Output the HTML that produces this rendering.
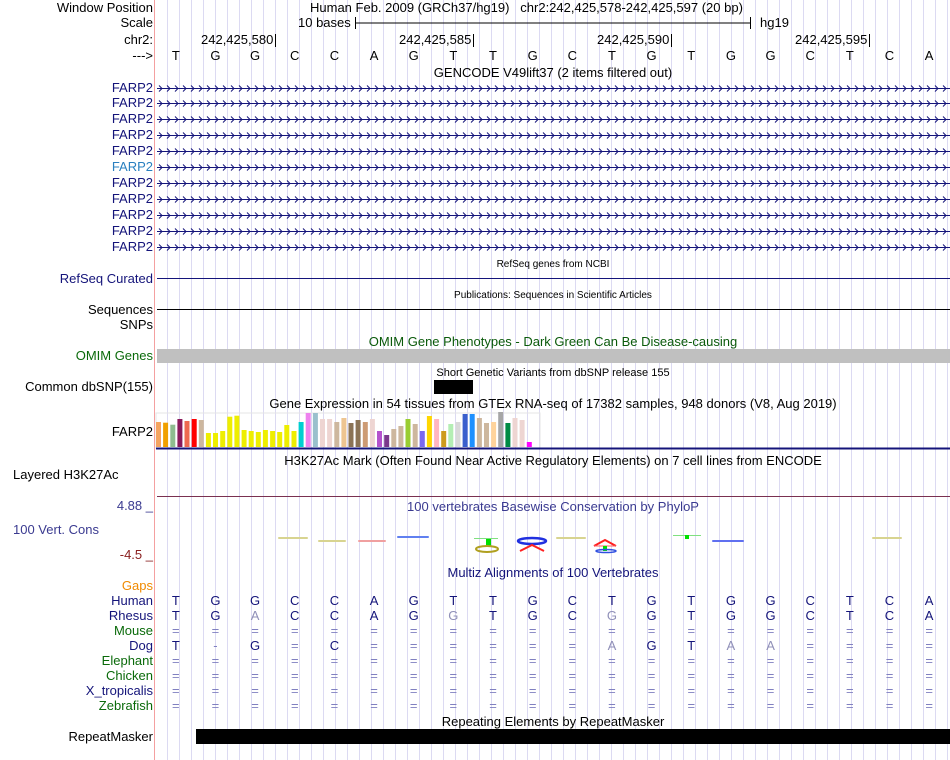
<!DOCTYPE html>
<html><head><meta charset="utf-8">
<style>
body{margin:0;width:950px;height:760px;overflow:hidden;background:#fff;font-family:"Liberation Sans",sans-serif;font-size:13px;position:relative}
#grid{position:absolute;left:156px;top:0;width:794px;height:760px;background:repeating-linear-gradient(90deg,transparent 0,transparent 11px,#dcdaf2 11px,#dcdaf2 12px)}
#pink{position:absolute;left:154px;top:0;width:1px;height:760px;background:#f4a0a0}
.t{position:absolute;white-space:nowrap;line-height:14px}
.l{position:absolute;right:797px;white-space:nowrap;line-height:14px;text-align:right}
.c{position:absolute;left:156px;width:794px;text-align:center;white-space:nowrap;line-height:14px}
.b{position:absolute;width:40px;text-align:center;line-height:14px}
</style></head><body>
<div id="grid"></div><div id="pink"></div>
<svg style="position:absolute;left:0;top:0" width="950" height="760">
<line x1="355" y1="23" x2="751" y2="23" stroke="#000"/><line x1="355.5" y1="17" x2="355.5" y2="29" stroke="#000"/><line x1="750.5" y1="17" x2="750.5" y2="29" stroke="#000"/>
<line x1="275.5" y1="34" x2="275.5" y2="47" stroke="#000"/><line x1="473.5" y1="34" x2="473.5" y2="47" stroke="#000"/><line x1="671.5" y1="34" x2="671.5" y2="47" stroke="#000"/><line x1="869.5" y1="34" x2="869.5" y2="47" stroke="#000"/>
<line x1="157" y1="278.5" x2="950" y2="278.5" stroke="#14147a"/>
<line x1="157" y1="309.5" x2="950" y2="309.5" stroke="#000"/>
<rect x="157" y="349" width="793" height="14" fill="#c0c0c0"/>
<rect x="434" y="380" width="39" height="14" fill="#000"/>
<rect x="156" y="413" width="384" height="35" fill="none" stroke="#e4e4e4"/>
<line x1="156" y1="448.5" x2="950" y2="448.5" stroke="#14147a" stroke-width="2"/>
<line x1="157" y1="496.5" x2="950" y2="496.5" stroke="#7a3050"/>
<rect x="196" y="729" width="754" height="15" fill="#000"/>
</svg>
<div class="l" style="top:1px">Window Position</div>
<div class="l" style="top:16px">Scale</div>
<div class="l" style="top:33px">chr2:</div>
<div class="l" style="top:49px">---&gt;</div>
<div class="t" style="left:310px;top:1px">Human Feb. 2009 (GRCh37/hg19)&nbsp;&nbsp; chr2:242,425,578-242,425,597 (20 bp)</div>
<div class="t" style="left:298px;top:16px">10 bases</div>
<div class="t" style="left:760px;top:16px">hg19</div>
<div class="t" style="left:201px;top:33px">242,425,580</div>
<div class="t" style="left:399px;top:33px">242,425,585</div>
<div class="t" style="left:597px;top:33px">242,425,590</div>
<div class="t" style="left:795px;top:33px">242,425,595</div>
<div class="c" style="top:66px">GENCODE V49lift37 (2 items filtered out)</div>
<div class="c" style="top:258px;font-size:10px">RefSeq genes from NCBI</div>
<div class="l" style="top:272px;color:#14147a">RefSeq Curated</div>
<div class="c" style="top:289px;font-size:10px">Publications: Sequences in Scientific Articles</div>
<div class="l" style="top:303px">Sequences</div>
<div class="l" style="top:318px">SNPs</div>
<div class="c" style="top:335px;color:#0a5a0a">OMIM Gene Phenotypes - Dark Green Can Be Disease-causing</div>
<div class="l" style="top:349px;color:#0a6a0a">OMIM Genes</div>
<div class="c" style="top:366px;font-size:11px">Short Genetic Variants from dbSNP release 155</div>
<div class="l" style="top:380px">Common dbSNP(155)</div>
<div class="c" style="top:397px">Gene Expression in 54 tissues from GTEx RNA-seq of 17382 samples, 948 donors (V8, Aug 2019)</div>
<div class="l" style="top:425px">FARP2</div>
<div class="c" style="top:454px">H3K27Ac Mark (Often Found Near Active Regulatory Elements) on 7 cell lines from ENCODE</div>
<div class="t" style="left:13px;top:468px">Layered H3K27Ac</div>
<div class="c" style="top:500px;color:#3a3a90">100 vertebrates Basewise Conservation by PhyloP</div>
<div class="l" style="top:499px;color:#3a3a90">4.88 _</div>
<div class="t" style="left:13px;top:523px;color:#3a3a90">100 Vert. Cons</div>
<div class="l" style="top:548px;color:#8a2020">-4.5 _</div>
<div class="c" style="top:566px;color:#14147a">Multiz Alignments of 100 Vertebrates</div>
<div class="l" style="top:579px;color:#f08a00">Gaps</div>
<div class="c" style="top:715px">Repeating Elements by RepeatMasker</div>
<div class="l" style="top:730px">RepeatMasker</div>
<div id="dyn"></div>
<script>
(function(){
var d=document.getElementById('dyn'),h='';
var seq='TGGCCAGTTGCTGTGGCTCA';
function bx(i){return 156+39.65*i;}
for(var i=0;i<20;i++)h+='<div class="b" style="left:'+(bx(i)-0.2)+'px;top:49px">'+seq[i]+'</div>';
var fy=[81,96,112,128,144,160,176,192,208,224,240];
for(var k=0;k<11;k++){h+='<div class="l" style="top:'+fy[k]+'px;color:'+(k==5?'#2a80c0':'#14147a')+'">FARP2</div>';}
var rows=[['Human','#14147a'],['Rhesus','#14147a'],['Mouse','#0a6a0a'],['Dog','#14147a'],['Elephant','#0a6a0a'],['Chicken','#0a6a0a'],['X_tropicalis','#14147a'],['Zebrafish','#0a6a0a']];
var rhesus='TGACCAGGTGCGGTGGCTCA',rg={2:1,7:1,11:1};
var dog='T-G=C======AGTAA====',dg={11:1,14:1,15:1};
for(var r=0;r<8;r++){var y=594+15*r;h+='<div class="l" style="top:'+y+'px;color:'+rows[r][1]+'">'+rows[r][0]+'</div>';
for(var i=0;i<20;i++){var ch,col='#14147a';
if(r==0)ch=seq[i];else if(r==1){ch=rhesus[i];if(rg[i])col='#9090b8';}
else if(r==3){ch=dog[i];if(dg[i])col='#9090b8';if(ch=='='||ch=='-')col='#8080c0';}
else{ch='=';col='#8080c0';}
h+='<div class="b" style="left:'+(bx(i)-0.2)+'px;top:'+y+'px;color:'+col+'">'+ch+'</div>';}}
d.innerHTML=h;
var g='';
for(var k=0;k<11;k++){var yy=fy[k]+7.5;var p='';
for(var x=159;x<946;x+=8){p+='M'+x+' '+(yy-3)+'L'+(x+3)+' '+yy+'L'+x+' '+(yy+3);}
g+='<line x1="157" y1="'+yy+'" x2="950" y2="'+yy+'" stroke="#14147a"/><path d="'+p+'" fill="none" stroke="#14147a" stroke-width="1"/>';}
var bars=[['#f4a460',66],['#f0a000',68],['#8fbc8f',74],['#8b1a5a',57],['#ee6a50',63],['red',57],['#cdb79e',60],['#eeee00',99],['#eeee00',99],['#eeee00',93],['#eeee00',50],['#eeee00',47],['#eeee00',90],['#eeee00',93],['#eeee00',96],['#eeee00',90],['#eeee00',93],['#eeee00',96],['#eeee00',75],['#eeee00',93],['#00ced1',66],['#ee82ee',39],['#9ac0cd',39],['#eed5d2',57],['#eed5d2',57],['#cdb79e',66],['#eec591',54],['#8b7355',69],['#8b7355',60],['#cd9b73',66],['#eed5d2',57],['#b452cd',93],['#7a378b',105],['#cdb79e',87],['#cdb79e',78],['#9acd32',57],['#cdb79e',72],['#7b68ee',93],['#ffd700',48],['#ffb6c1',57],['#cd9b1d',93],['#b4eeb4',72],['#d9d9d9',66],['#3a5fcd',42],['#1e90ff',42],['#cdb79e',54],['#cdb79e',69],['#ffd39b',66],['#a6a6a6',36],['#008b45',69],['#eed5d2',54],['#eed5d2',60],['#ff00ff',126]];
for(var i=0;i<bars.length;i++){var bt=400+bars[i][1]/3;g+='<rect x="'+(156+7.13*i).toFixed(1)+'" y="'+bt.toFixed(1)+'" width="5" height="'+(447-bt).toFixed(1)+'" fill="'+bars[i][0]+'"/>';}
var cs=[[278,537,30,'#d8d490'],[318,540,28,'#d8d490'],[358,540,28,'#f0a0a0'],[397,536,32,'#6080f0'],[712,540,32,'#6070f0'],[872,537,30,'#d8d490'],[556,537,30,'#d8d490']];
cs.forEach(function(c){g+='<rect x="'+c[0]+'" y="'+c[1]+'" width="'+c[2]+'" height="2" rx="1" fill="'+c[3]+'"/>';});
g+='<line x1="474" y1="538.5" x2="498" y2="538.5" stroke="#80e080"/><rect x="486" y="539" width="5" height="7" fill="#00e000"/><ellipse cx="487" cy="549" rx="11" ry="3" fill="none" stroke="#b0a020" stroke-width="2"/>';
g+='<ellipse cx="532" cy="541" rx="14" ry="3" fill="none" stroke="#2030e0" stroke-width="2.5"/><path d="M520 551 L532 545 L544 551" fill="none" stroke="#ff2020" stroke-width="2"/>';
g+='<path d="M594 546 L605 540 L616 546" fill="none" stroke="#ff2020" stroke-width="2"/><line x1="594" y1="546" x2="616" y2="546" stroke="#ff6060"/><rect x="603" y="546" width="4" height="5" fill="#00e000"/><ellipse cx="606" cy="551" rx="10" ry="1.5" fill="none" stroke="#3050e0" stroke-width="1.5"/>';
g+='<line x1="673" y1="535.5" x2="701" y2="535.5" stroke="#80e080"/><rect x="685" y="535" width="4" height="4" fill="#00e000"/>';
var wrap=document.createElement('div');
wrap.innerHTML='<svg xmlns="http://www.w3.org/2000/svg" style="position:absolute;left:0;top:0" width="950" height="760">'+g+'</svg>';
document.body.appendChild(wrap.firstChild);
})();
</script>
</body></html>
